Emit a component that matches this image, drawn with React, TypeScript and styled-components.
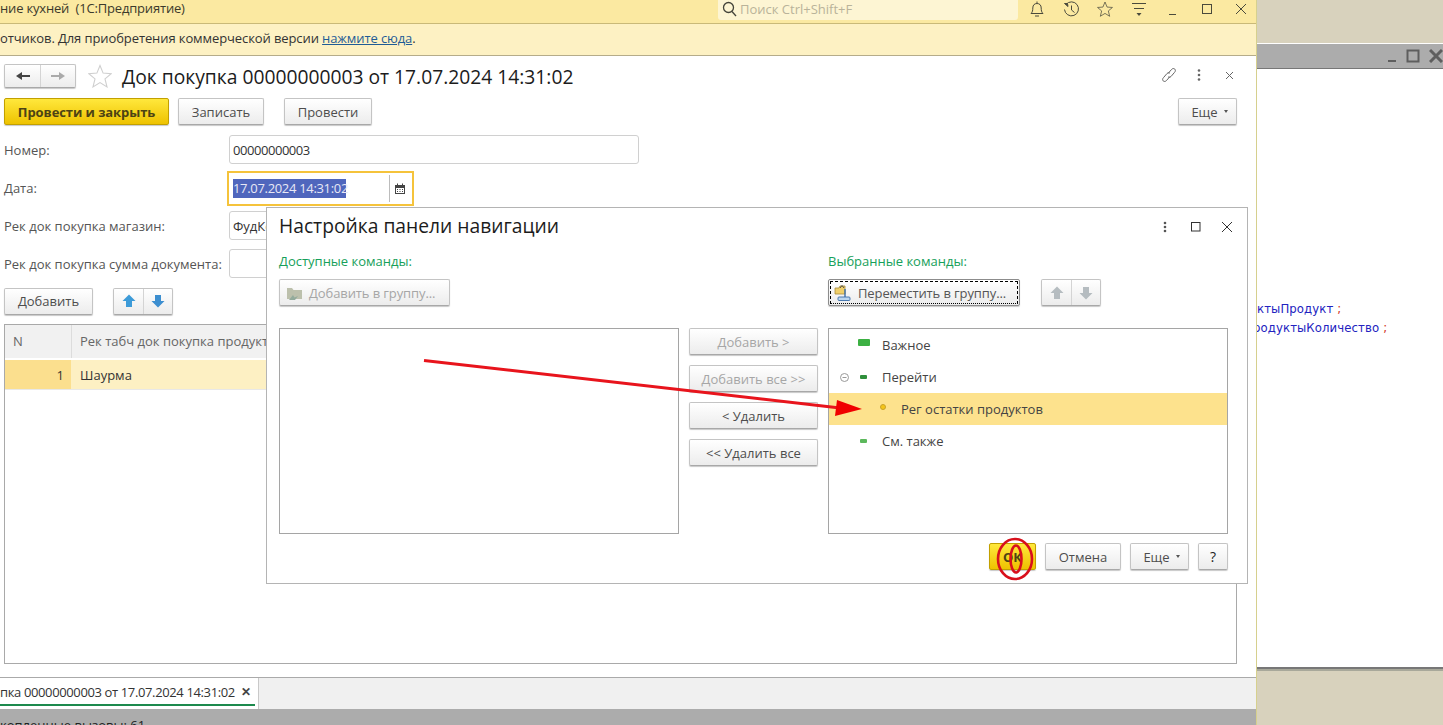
import React from "react";
import styled, { createGlobalStyle, css } from "styled-components";

const Global = createGlobalStyle`
  html, body { margin: 0; padding: 0; height: 725px; overflow: hidden; background: #fff; }
  * { box-sizing: border-box; }
  #root { height: 725px; }
`;

const Page = styled.div`
  position: relative;
  width: 1443px;
  height: 725px;
  overflow: hidden;
  display: grid;
  grid-template-columns: 1257px 186px;
  font-family: "Open Sans", "Noto Sans", sans-serif;
  font-size: 13px;
  color: #333;
`;

const MainWindow = styled.div`
  display: flex;
  flex-direction: column;
  height: 725px;
  border-right: 1px solid #d6d08e;
  overflow: hidden;
  min-width: 0;
`;

const TitleBar = styled.div`
  height: 24px;
  flex: none;
  background: #fbe9a1;
  border-bottom: 1px solid #c9b978;
  display: flex;
  align-items: flex-start;
`;
const AppTitle = styled.div`
  width: 718px;
  flex: none;
  height: 16px;
  line-height: 16px;
  white-space: pre;
  color: #3c3a2c;
  letter-spacing: -0.18px;
`;
const SearchBox = styled.div`
  width: 300px;
  flex: none;
  height: 20px;
  background: #fdf5d3;
  border-radius: 0 0 3px 3px;
  display: flex;
  align-items: center;
  padding-left: 4px;
  gap: 3px;
  color: #b9b39a;
  line-height: 16px;
  margin-right: 2px;
  padding-bottom: 3px;
`;
const TopIcons = styled.div`
  display: flex;
  align-items: center;
  height: 18px;
`;
const TopIcon = styled.div`
  width: 34px;
  display: flex;
  justify-content: center;
  color: #4a4a3c;
`;

const Notice = styled.div`
  height: 32px;
  flex: none;
  background: #fdf1c3;
  border-bottom: 1px solid #b5ac8a;
  display: flex;
  align-items: center;
  padding-bottom: 3px;
  color: #333;
  white-space: pre;
  letter-spacing: -0.1px;
`;
const NoticeLink = styled.a`
  color: #1f5c96;
  text-decoration: underline;
`;

const Content = styled.div`
  height: 621px;
  flex: none;
  background: #fff;
  padding: 0 19px 0 4px;
  display: flex;
  flex-direction: column;
`;

const HeaderRow = styled.div`
  height: 42px;
  flex: none;
  display: flex;
  align-items: center;
  padding-bottom: 2px;
`;
const StarSlot = styled.div`
  margin-left: 12px;
  height: 24px;
`;
const DocTitle = styled.div`
  font-size: 19.25px;
  color: #1c1c1c;
  margin-left: 10px;
  flex: 1;
  white-space: nowrap;
`;
const WinTools = styled.div`
  display: flex;
  align-items: center;
  margin-top: -2px;
  margin-right: -7px;
`;
const WinTool = styled.div`
  width: 30px;
  display: flex;
  justify-content: center;
  color: #666;
`;

const ButtonBase = css`
  height: 27px;
  border: 1px solid #c4c4c4;
  border-bottom-color: #a8a8a8;
  border-radius: 2px;
  background: linear-gradient(#ffffff, #ececec);
  box-shadow: 0 1px 1px rgba(0, 0, 0, 0.22);
  display: inline-flex;
  align-items: center;
  justify-content: center;
  font-family: inherit;
  font-size: 13px;
  color: #4d4d4d;
  padding: 0;
  white-space: nowrap;
  flex: none;
`;
const Button = styled.div<{ $w: number; $ml?: number; $muted?: boolean; $dark?: boolean; $menu?: boolean }>`
  ${ButtonBase};
  width: ${(p) => p.$w}px;
  margin-left: ${(p) => p.$ml ?? 0}px;
  ${(p) => p.$muted && "color: #a6a6a6;"}
  ${(p) => p.$dark && "color: #222; font-size: 14px;"}
  ${(p) => p.$menu && "padding-left: 4px;"}
`;
const PrimaryButton = styled.div<{ $w: number }>`
  ${ButtonBase};
  width: ${(p) => p.$w}px;
  background: linear-gradient(#ffe83c, #eec200);
  border-color: #c2a000;
  font-weight: 700;
  color: #4d4314;
  letter-spacing: -0.08px;
`;
const Caret = styled.span`
  display: inline-block;
  width: 0;
  height: 0;
  margin-left: 6px;
  border-left: 2.5px solid transparent;
  border-right: 2.5px solid transparent;
  border-top: 3px solid #555;
`;
const Split = styled.div<{ $w: number; $ml?: number; $h?: number }>`
  ${ButtonBase};
  width: ${(p) => p.$w}px;
  height: ${(p) => p.$h ?? 27}px;
  margin-left: ${(p) => p.$ml ?? 0}px;
  display: inline-grid;
  grid-template-columns: 1fr 1fr;
`;
const SplitCell = styled.div`
  display: flex;
  align-items: center;
  justify-content: center;
  height: 100%;
  & + & { border-left: 1px solid #d4d4d4; }
`;

const CommandBar = styled.div`
  height: 27px;
  flex: none;
  display: flex;
  align-items: center;
  justify-content: space-between;
`;
const Group = styled.div`
  display: flex;
  align-items: center;
`;

const FormRow = styled.div<{ $mt?: number }>`
  height: 38px;
  flex: none;
  display: flex;
  align-items: center;
  margin-top: ${(p) => p.$mt ?? 0}px;
  color: #555;
`;
const FieldLabel = styled.div`
  width: 225px;
  flex: none;
  white-space: nowrap;
`;
const Input = styled.div<{ $w: number; $tight?: boolean }>`
  width: ${(p) => p.$w}px;
  height: 29px;
  margin-bottom: 1px;
  border: 1px solid #d0d0d0;
  border-radius: 3px;
  padding-left: 3px;
  display: flex;
  align-items: center;
  color: #333;
  overflow: hidden;
  flex: none;
  ${(p) => p.$tight && "letter-spacing: -0.45px;"}
`;
const FocusField = styled.div`
  width: 187px;
  height: 35px;
  margin-left: -2px;
  border: 2px solid #f5c33b;
  display: flex;
  align-items: center;
  padding-left: 4px;
  flex: none;
`;
const Selected = styled.span`
  background: #4f66bd;
  color: #e8e8f5;
  line-height: 19px;
  width: 113px;
  flex: none;
  white-space: nowrap;
  letter-spacing: -0.32px;
`;
const CalendarCell = styled.div`
  margin-left: 43px;
  width: 21px;
  height: 27px;
  border-left: 1px solid #bcbcbc;
  display: flex;
  align-items: center;
  justify-content: center;
  color: #444;
`;

const TableBar = styled.div`
  display: flex;
  height: 28px;
  align-items: center;
  flex: none;
  margin-top: 4px;
`;
const Table = styled.div`
  height: 340px;
  width: 1233px;
  margin-top: 9px;
  flex: none;
  border: 1px solid #a9a9a9;
`;
const TableHead = styled.div`
  height: 34px;
  background: #f1f1f1;
  display: grid;
  grid-template-columns: 66px 1fr;
  border-bottom: 1px solid #fff;
  color: #666;
`;
const TableRow = styled.div`
  height: 30px;
  display: grid;
  margin-top: 1px;
  grid-template-columns: 66px 1fr;
  background: #fdf0c3;
  border-bottom: 1px solid #e8e8e8;
`;
const HeadCell = styled.div`
  display: flex;
  align-items: center;
  padding: 0 0 1px 8px;
  & + & { border-left: 1px solid #dcdcdc; }
`;
const NumCell = styled.div`
  background: #fbdf8e;
  display: flex;
  align-items: center;
  justify-content: flex-end;
  padding-right: 7px;
`;
const TextCell = styled.div`
  display: flex;
  align-items: center;
  padding-left: 9px;
`;

const TabBar = styled.div`
  height: 32px;
  flex: none;
  background: #f0f0f0;
  border-top: 1px solid #aaa;
  display: flex;
`;
const Tab = styled.div`
  width: 259px;
  height: 31px;
  background: #fff;
  border-right: 1px solid #c9c9c9;
  display: flex;
  align-items: center;
  white-space: pre;
  padding-bottom: 4px;
  position: relative;
  color: #333;
  letter-spacing: -0.37px;
`;
const TabUnderline = styled.div`
  position: absolute;
  left: 0;
  right: 3px;
  bottom: 3px;
  height: 2px;
  background: #1d8a4e;
`;
const TabClose = styled.span`
  margin-left: 6px;
  color: #444;
  font-weight: 700;
  font-size: 12px;
`;
const StatusBar = styled.div`
  height: 16px;
  flex: none;
  background: #acacac;
  color: #222;
  padding-top: 7px;
  white-space: pre;
  overflow: hidden;
  line-height: 18px;
`;

const SidePanel = styled.div`
  height: 725px;
  background: #fff;
  display: flex;
  flex-direction: column;
  overflow: hidden;
  min-width: 0;
`;
const SideTop = styled.div`
  height: 44px;
  flex: none;
  background: #d8d2bd;
  border-bottom: 1px solid #fff;
`;
const SideCaption = styled.div`
  height: 25px;
  flex: none;
  background: #acacac;
  border-bottom: 1px solid #777;
  display: flex;
  justify-content: flex-end;
  align-items: center;
  gap: 9px;
  color: #5e5e5e;
`;
const CodeArea = styled.div`
  flex: 1;
  min-height: 0;
  padding-top: 231px;
  font-family: "DejaVu Sans", sans-serif;
  font-size: 11.7px;
  line-height: 19px;
  letter-spacing: 0.1px;
  color: #2222c0;
  white-space: pre;
  overflow: hidden;
`;
const CodeLine = styled.div<{ $indent: number }>`
  margin-left: ${(p) => p.$indent}px;
`;
const Semi = styled.span`
  color: #d0301c;
  margin-left: 4px;
`;
const SideBottom = styled.div`
  height: 58px;
  flex: none;
  background: #d8d2bd;
  border-top: 2px solid #777;
  box-shadow: inset 0 2px 0 #a8a89a;
`;

const Dialog = styled.div`
  position: absolute;
  left: 266px;
  top: 207px;
  width: 982px;
  height: 377px;
  background: #fff;
  border: 1px solid #b4b4b4;
  padding: 0 12px;
  display: flex;
  flex-direction: column;
`;
const DialogHead = styled.div`
  height: 37px;
  flex: none;
  display: flex;
  align-items: center;
`;
const DialogTitle = styled.div`
  font-size: 19.25px;
  color: #1c1c1c;
  flex: 1;
  padding-bottom: 2px;
`;
const DialogTools = styled.div`
  display: flex;
  align-items: center;
  margin-right: -7px;
`;
const DialogTool = styled.div`
  width: 31px;
  display: flex;
  justify-content: center;
  color: #333;
`;
const Columns = styled.div`
  display: grid;
  grid-template-columns: 400px 129px 400px;
  column-gap: 10px;
  margin-top: 6px;
`;
const Column = styled.div`
  display: flex;
  flex-direction: column;
`;
const GreenLabel = styled.div`
  height: 20px;
  line-height: 20px;
  color: #16a05a;
  margin-bottom: 8px;
`;
const ToolRow = styled.div`
  height: 27px;
  display: flex;
  align-items: center;
`;
const ListBox = styled.div`
  height: 206px;
  margin-top: 22px;
  border: 1px solid #a5a5a5;
  background: #fff;
`;
const MidColumn = styled.div`
  padding-top: 77px;
  display: flex;
  flex-direction: column;
  gap: 10px;
`;
const IconButton = styled.div<{ $w: number; $focus?: boolean }>`
  ${ButtonBase};
  width: ${(p) => p.$w}px;
  gap: 6px;
  position: relative;
  justify-content: flex-start;
  padding-left: 6px;
  letter-spacing: -0.1px;
  color: ${(p) => (p.$focus ? "#555" : "#a6a6a6")};
  ${(p) => p.$focus && "border-color: #8c8c8c; padding-left: 5px;"}
`;
const FocusDots = styled.div`
  position: absolute;
  inset: 1px;
  border: 1px dashed #000;
  border-bottom-style: dotted;
`;
const TreeRow = styled.div<{ $selected?: boolean }>`
  height: 32px;
  display: flex;
  align-items: center;
  color: #444;
  background: ${(p) => (p.$selected ? "#fde28d" : "transparent")};
`;
const Toggle = styled.div`
  width: 30px;
  flex: none;
  display: flex;
  justify-content: center;
`;
const MarkerSlot = styled.div<{ $level?: number }>`
  width: ${(p) => (p.$level ? 42 : 23)}px;
  padding-left: ${(p) => (p.$level ? 21 : 0)}px;
  flex: none;
  display: flex;
  align-items: center;
`;
const Marker = styled.div<{ $big?: boolean; $pale?: boolean }>`
  width: ${(p) => (p.$big ? 12 : 7)}px;
  height: ${(p) => (p.$big ? 7 : 4)}px;
  margin-left: ${(p) => (p.$big ? -1 : 1)}px;
  margin-bottom: ${(p) => (p.$big ? 5 : 1)}px;
  border-radius: 1px;
  background: ${(p) => (p.$pale ? "#5cb85c" : p.$big ? "#3cb043" : "#2f8f3c")};
`;
const Dot = styled.div`
  width: 6px;
  height: 6px;
  border-radius: 50%;
  background: #f5c518;
  border: 1px solid #c9a227;
  margin-bottom: 4px;
`;
const Footer = styled.div`
  display: flex;
  justify-content: flex-end;
  margin-top: 9px;
  width: 949px;
`;

const Overlay = styled.svg`
  position: absolute;
  left: 0;
  top: 0;
  pointer-events: none;
`;

const Star = ({ s = 24, c = "#cfcfcf" }: { s?: number; c?: string }) => (
  <svg width={s} height={s} viewBox="0 0 24 24" fill="none" stroke={c} strokeWidth="1.1">
    <path d="M12 1.5l3.1 7.6 8.1.6-6.2 5.2 2 8-7-4.3-7 4.3 2-8L.8 9.7l8.1-.6z" />
  </svg>
);
const ArrowGlyph = ({ dir, c }: { dir: "up" | "down"; c: string }) => (
  <svg width="16" height="16" viewBox="0 0 16 16">
    <path d={dir === "up" ? "M8 1.500L14.500 8H11v6H5V8H1.500z" : "M8 14.500L14.500 8H11V2H5v6H1.500z"} fill={c} />
  </svg>
);
const ThinArrow = ({ left, c }: { left?: boolean; c: string }) => (
  <svg width="14" height="10" viewBox="0 0 14 10">
    <path d={left ? "M6 1v3h8v2H6v3L0 5z" : "M8 1v3H0v2h8v3l6-4z"} fill={c} />
  </svg>
);
const FolderAdd = () => (
  <svg width="17" height="16" viewBox="0 0 17 16">
    <path d="M1 3h5l1.500 2H16v9H1z" fill="#bcc0ac" />
    <path d="M3 15l4-5 1.500 2.500L12 11l-3 4z" fill="#93ab9c" />
  </svg>
);
const MoveToGroup = () => (
  <svg width="18" height="18" viewBox="0 0 18 18">
    <path d="M1 4h4l1-2h5v8H1z" fill="#f0cf6a" stroke="#a68a3a" strokeWidth="0.8" />
    <path d="M6 4l2-2.500L10 4" fill="none" stroke="#444" strokeWidth="0.9" />
    <path d="M11 5v9" stroke="#3b6ea8" strokeWidth="1.4" />
    <rect x="4" y="13" width="12" height="3.500" rx="1" fill="#bcd6ee" stroke="#3b6ea8" strokeWidth="0.9" />
  </svg>
);
const Calendar = () => (
  <svg width="10" height="11" viewBox="0 0 10 11" fill="currentColor">
    <path d="M0 2h2V.5h1V2h4V.5h1V2h2v9H0zm1 3v5h8V5z" />
    <path d="M2 6h1v1H2zm2.500 0h1v1h-1zM7 6h1v1H7zM2 8h1v1H2zm2.500 0h1v1h-1zM7 8h1v1H7z" />
  </svg>
);

export default function App() {
  return (
    <>
      <Global />
      <Page>
        <MainWindow>
          <TitleBar>
            <AppTitle>ние кухней  (1С:Предприятие)</AppTitle>
            <SearchBox>
              <svg width="15" height="16" viewBox="0 0 15 16" fill="none" stroke="#44443a" strokeWidth="1.3">
                <circle cx="6.500" cy="6.500" r="5" />
                <path d="M10 10.500l4 4.500" />
              </svg>
              Поиск Ctrl+Shift+F
            </SearchBox>
            <TopIcons>
              <TopIcon>
                <svg width="14" height="17" viewBox="0 0 14 17" fill="none" stroke="currentColor" strokeWidth="1">
                  <path d="M7 .5v1.500M1 12.500c1.500-1.500 1.800-3 1.800-5.500C2.800 4 4.500 2.500 7 2.500S11.200 4 11.200 7c0 2.500.3 4 1.800 5.500zM5 15h4" />
                </svg>
              </TopIcon>
              <TopIcon>
                <svg width="17" height="17" viewBox="0 0 17 17" fill="none" stroke="currentColor" strokeWidth="1">
                  <path d="M3 3.500A7 7 0 1 1 1.500 8.500M8.500 4.500v4.500l3 2.500" />
                  <path d="M1.500 2.500l3 0 .5 3z" fill="currentColor" />
                </svg>
              </TopIcon>
              <TopIcon>
                <Star s={16} c="#4a4a3c" />
              </TopIcon>
              <TopIcon>
                <svg width="16" height="16" viewBox="0 0 16 16" fill="none" stroke="currentColor">
                  <path d="M1 2.500h14M3 7.500h10" />
                  <path d="M5.500 12h5L8 15z" fill="currentColor" stroke="none" />
                </svg>
              </TopIcon>
              <TopIcon>
                <svg width="10" height="14" viewBox="0 0 10 14" stroke="currentColor">
                  <path d="M1 12.500h7" />
                </svg>
              </TopIcon>
              <TopIcon>
                <svg width="12" height="12" viewBox="0 0 12 12" fill="none" stroke="currentColor">
                  <rect x="1.500" y="1.500" width="9" height="9" />
                </svg>
              </TopIcon>
              <TopIcon>
                <svg width="12" height="12" viewBox="0 0 12 12" stroke="currentColor">
                  <path d="M1 1l10 10M11 1L1 11" />
                </svg>
              </TopIcon>
            </TopIcons>
          </TitleBar>
          <Notice>
            отчиков. Для приобретения коммерческой версии <NoticeLink>нажмите сюда</NoticeLink>.
          </Notice>
          <Content>
            <HeaderRow>
              <Split $w={72} $h={24}>
                <SplitCell>
                  <ThinArrow left c="#444" />
                </SplitCell>
                <SplitCell>
                  <ThinArrow c="#aaa" />
                </SplitCell>
              </Split>
              <StarSlot>
                <Star />
              </StarSlot>
              <DocTitle>Док покупка 00000000003 от 17.07.2024 14:31:02</DocTitle>
              <WinTools>
                <WinTool>
                  <svg width="16" height="16" viewBox="0 0 16 16" fill="none" stroke="currentColor" strokeWidth="1">
                    <path d="M7 6.500l3.500-4c1-1.200 2.500-1.200 3.300-.4s.8 2.200-.3 3.300L10 9.500c-1 1-2.300.9-3 .2M9 9.500l-3.500 4c-1 1.200-2.500 1.200-3.300.4s-.8-2.200.3-3.300L6 6.500c1-1 2.300-.9 3-.2" />
                  </svg>
                </WinTool>
                <WinTool>
                  <svg width="4" height="14" viewBox="0 0 4 14" fill="currentColor">
                    <circle cx="2" cy="2.500" r="1.300" />
                    <circle cx="2" cy="7" r="1.300" />
                    <circle cx="2" cy="11.500" r="1.300" />
                  </svg>
                </WinTool>
                <WinTool>
                  <svg width="9" height="9" viewBox="0 0 9 9" stroke="currentColor">
                    <path d="M1 1l7 7M8 1L1 8" />
                  </svg>
                </WinTool>
              </WinTools>
            </HeaderRow>
            <CommandBar>
              <Group>
                <PrimaryButton $w={165}>Провести и закрыть</PrimaryButton>
                <Button $w={86} $ml={9}>
                  Записать
                </Button>
                <Button $w={88} $ml={20}>
                  Провести
                </Button>
              </Group>
              <Button $w={59} $menu>
                Еще
                <Caret />
              </Button>
            </CommandBar>
            <FormRow $mt={6}>
              <FieldLabel>Номер:</FieldLabel>
              <Input $w={410} $tight>
                00000000003
              </Input>
            </FormRow>
            <FormRow>
              <FieldLabel>Дата:</FieldLabel>
              <FocusField>
                <Selected>17.07.2024 14:31:02</Selected>
                <CalendarCell>
                  <Calendar />
                </CalendarCell>
              </FocusField>
            </FormRow>
            <FormRow>
              <FieldLabel>Рек док покупка магазин:</FieldLabel>
              <Input $w={200}>ФудКорт</Input>
            </FormRow>
            <FormRow>
              <FieldLabel>Рек док покупка сумма документа:</FieldLabel>
              <Input $w={200} />
            </FormRow>
            <TableBar>
              <Button $w={89}>Добавить</Button>
              <Split $w={60} $ml={20}>
                <SplitCell>
                  <ArrowGlyph dir="up" c="#3d9bd8" />
                </SplitCell>
                <SplitCell>
                  <ArrowGlyph dir="down" c="#3d8fd0" />
                </SplitCell>
              </Split>
            </TableBar>
            <Table>
              <TableHead>
                <HeadCell>N</HeadCell>
                <HeadCell>Рек табч док покупка продукт</HeadCell>
              </TableHead>
              <TableRow>
                <NumCell>1</NumCell>
                <TextCell>Шаурма</TextCell>
              </TableRow>
            </Table>
          </Content>
          <TabBar>
            <Tab>
              пка 00000000003 от 17.07.2024 14:31:02
              <TabClose>✕</TabClose>
              <TabUnderline />
            </Tab>
          </TabBar>
          <StatusBar>копленные вызовы: 61</StatusBar>
        </MainWindow>

        <SidePanel>
          <SideTop />
          <SideCaption>
            <svg width="10" height="14" viewBox="0 0 10 14" fill="currentColor">
              <rect x="1" y="11" width="8" height="2" />
            </svg>
            <svg width="14" height="14" viewBox="0 0 14 14" fill="none" stroke="currentColor" strokeWidth="2">
              <rect x="1.500" y="1.500" width="11" height="11" />
            </svg>
            <svg width="14" height="14" viewBox="0 0 14 14" stroke="currentColor" strokeWidth="3">
              <path d="M1 1l12 12M13 1L1 13" />
            </svg>
          </SideCaption>
          <CodeArea>
            <CodeLine $indent={0}>
              ктыПродукт<Semi>;</Semi>
            </CodeLine>
            <CodeLine $indent={-4}>
              родуктыКоличество<Semi>;</Semi>
            </CodeLine>
          </CodeArea>
          <SideBottom />
        </SidePanel>

        <Dialog>
          <DialogHead>
            <DialogTitle>Настройка панели навигации</DialogTitle>
            <DialogTools>
              <DialogTool>
                <svg width="4" height="14" viewBox="0 0 4 14" fill="#555">
                  <circle cx="2" cy="3" r="1.300" />
                  <circle cx="2" cy="7" r="1.300" />
                  <circle cx="2" cy="11" r="1.300" />
                </svg>
              </DialogTool>
              <DialogTool>
                <svg width="11" height="11" viewBox="0 0 11 11" fill="none" stroke="currentColor">
                  <rect x="1.500" y="1.500" width="8.500" height="8.500" />
                </svg>
              </DialogTool>
              <DialogTool>
                <svg width="12" height="12" viewBox="0 0 12 12" stroke="currentColor">
                  <path d="M1 1l10 10M11 1L1 11" />
                </svg>
              </DialogTool>
            </DialogTools>
          </DialogHead>
          <Columns>
            <Column>
              <GreenLabel>Доступные команды:</GreenLabel>
              <ToolRow>
                <IconButton $w={171}>
                  <FolderAdd />
                  Добавить в группу...
                </IconButton>
              </ToolRow>
              <ListBox />
            </Column>
            <MidColumn>
              <Button $w={129} $muted>
                Добавить &gt;
              </Button>
              <Button $w={129} $muted>
                Добавить все &gt;&gt;
              </Button>
              <Button $w={129}>&lt; Удалить</Button>
              <Button $w={129}>&lt;&lt; Удалить все</Button>
            </MidColumn>
            <Column>
              <GreenLabel>Выбранные команды:</GreenLabel>
              <ToolRow>
                <IconButton $w={192} $focus>
                  <FocusDots />
                  <MoveToGroup />
                  Переместить в группу...
                </IconButton>
                <Split $w={60} $ml={21}>
                  <SplitCell>
                    <ArrowGlyph dir="up" c="#b5bcc0" />
                  </SplitCell>
                  <SplitCell>
                    <ArrowGlyph dir="down" c="#b5bcc0" />
                  </SplitCell>
                </Split>
              </ToolRow>
              <ListBox>
                <TreeRow>
                  <Toggle />
                  <MarkerSlot>
                    <Marker $big />
                  </MarkerSlot>
                  Важное
                </TreeRow>
                <TreeRow>
                  <Toggle>
                    <svg width="9" height="9" viewBox="0 0 9 9" fill="none" stroke="#999">
                      <circle cx="4.500" cy="4.500" r="4" />
                      <path d="M2.500 4.500h4" />
                    </svg>
                  </Toggle>
                  <MarkerSlot>
                    <Marker />
                  </MarkerSlot>
                  Перейти
                </TreeRow>
                <TreeRow $selected>
                  <Toggle />
                  <MarkerSlot $level={1}>
                    <Dot />
                  </MarkerSlot>
                  Рег остатки продуктов
                </TreeRow>
                <TreeRow>
                  <Toggle />
                  <MarkerSlot>
                    <Marker $pale />
                  </MarkerSlot>
                  См. также
                </TreeRow>
              </ListBox>
            </Column>
          </Columns>
          <Footer>
            <PrimaryButton $w={47}>ОК</PrimaryButton>
            <Button $w={76} $ml={9}>
              Отмена
            </Button>
            <Button $w={59} $ml={9} $menu>
              Еще
              <Caret />
            </Button>
            <Button $w={30} $ml={9} $dark>
              ?
            </Button>
          </Footer>
        </Dialog>

        <Overlay width="1443" height="725" viewBox="0 0 1443 725">
          <path d="M424 360.500L840 408" stroke="#e8141c" strokeWidth="3" fill="none" />
          <path d="M837 400L862 409L835 416z" fill="#f00000" />
          <ellipse cx="1015" cy="559" rx="17" ry="20" fill="none" stroke="#d8101c" strokeWidth="2.600" />
          <ellipse cx="1016" cy="559" rx="5.500" ry="13.500" fill="none" stroke="#d8101c" strokeWidth="2.600" />
        </Overlay>
      </Page>
    </>
  );
}
